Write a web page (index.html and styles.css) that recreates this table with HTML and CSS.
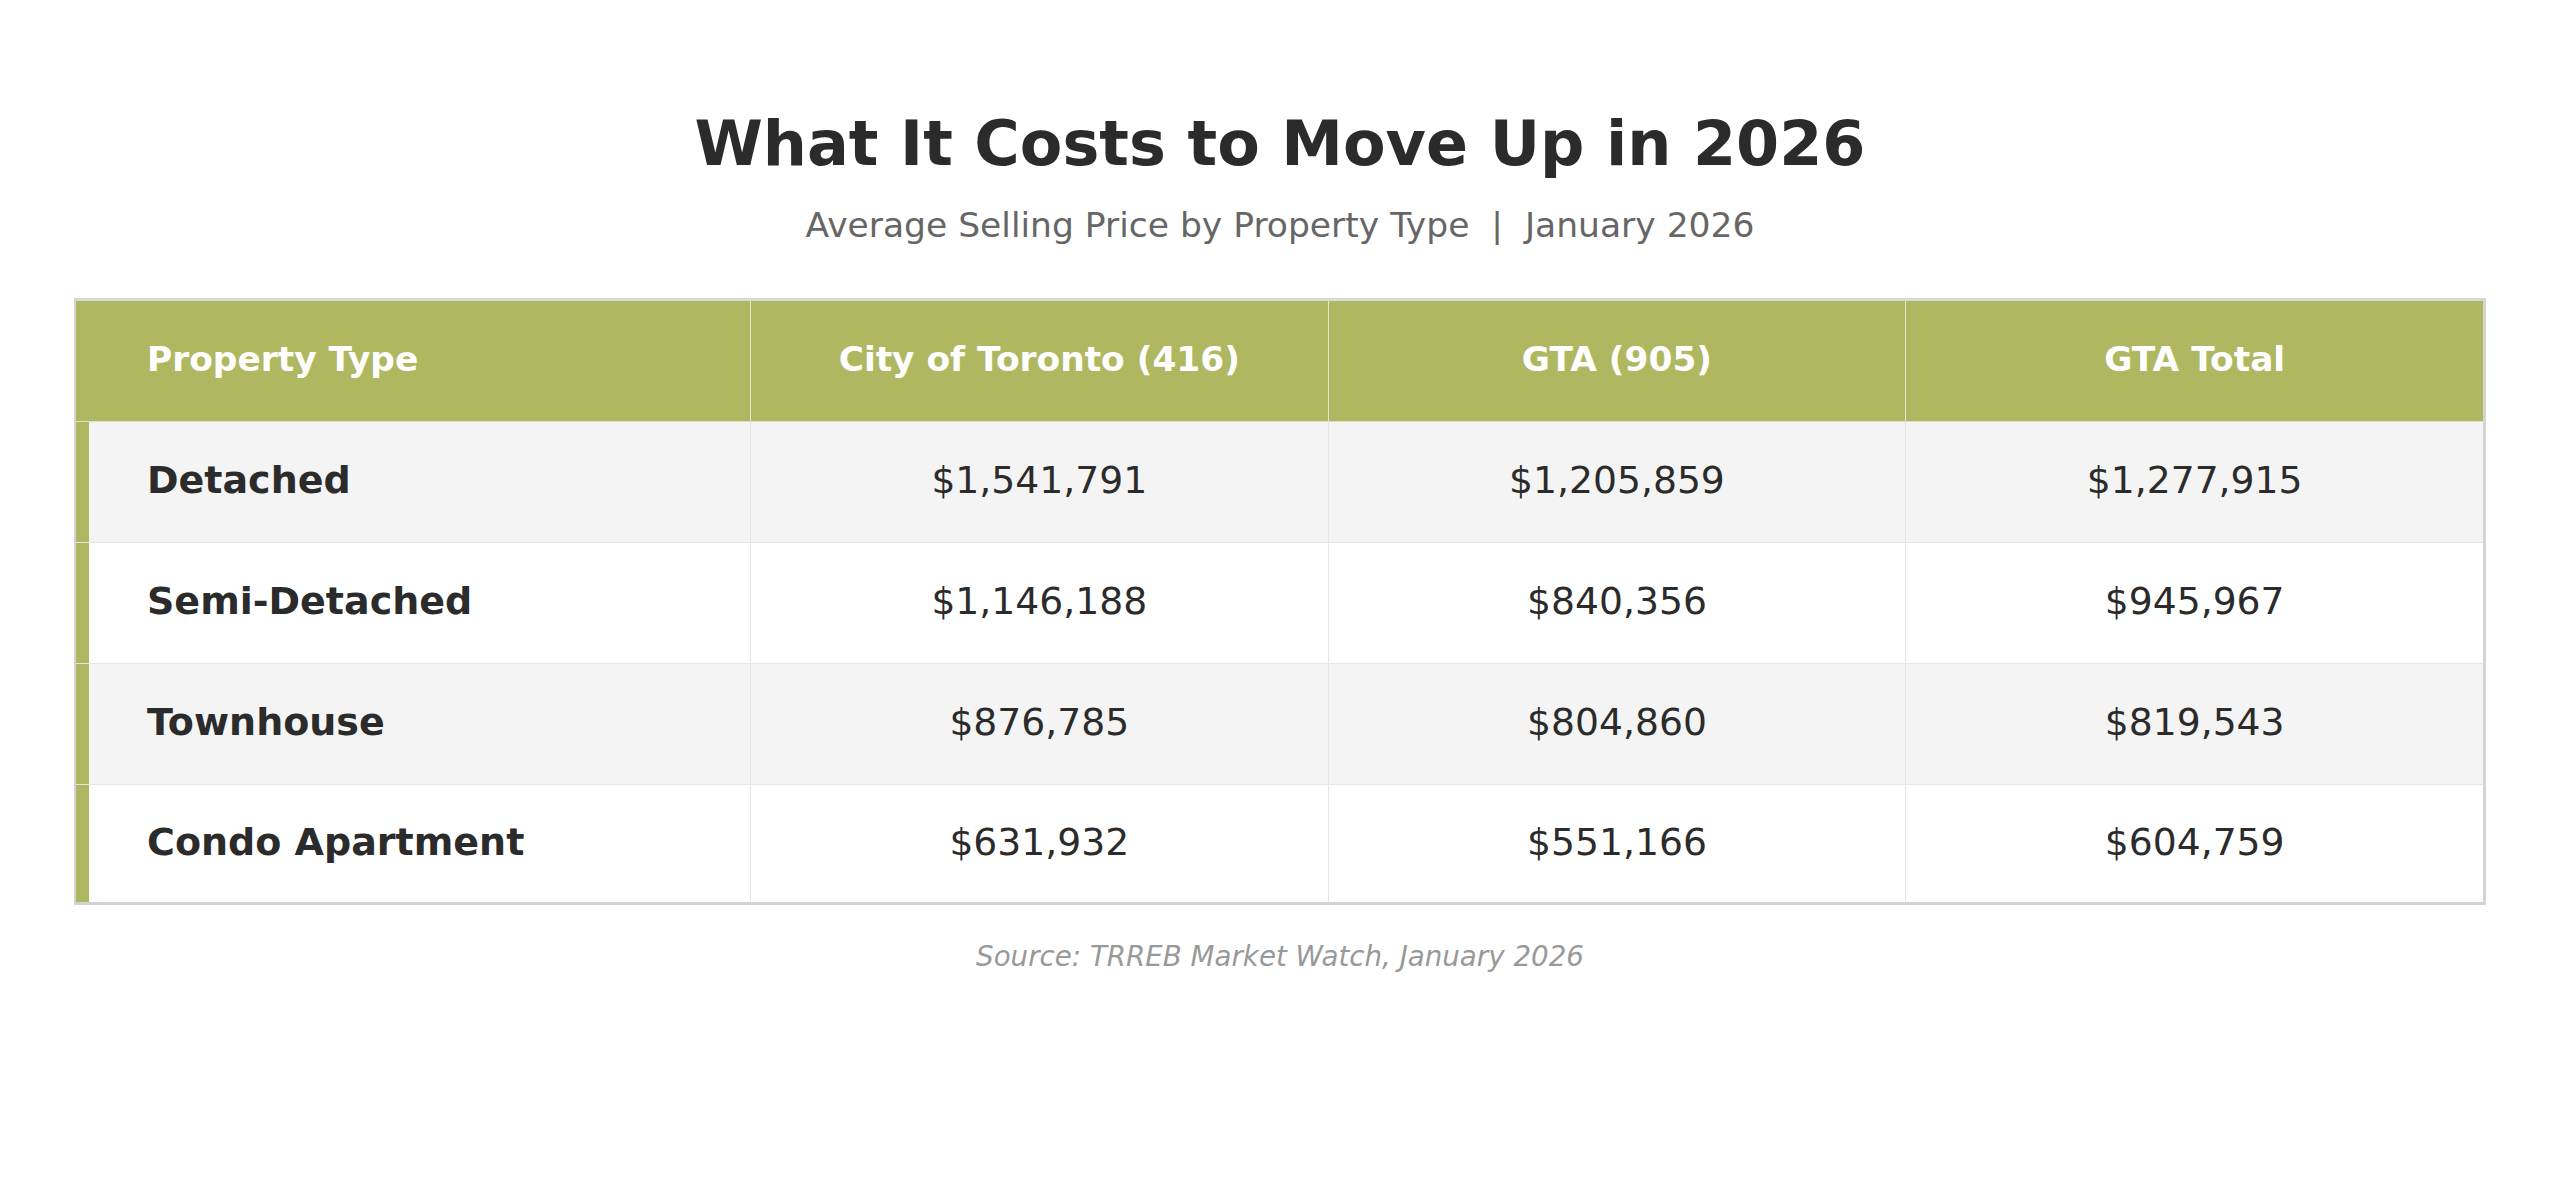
FILE: index.html
```html
<!DOCTYPE html>
<html lang="en">
<head>
<meta charset="utf-8">
<title>What It Costs to Move Up in 2026</title>
<link rel="stylesheet" href="styles.css">
</head>
<body>
<main class="page">
  <h1 class="title">What It Costs to Move Up in 2026</h1>
  <p class="subtitle">Average Selling Price by Property Type &nbsp;|&nbsp; January 2026</p>
  <div class="table">
    <div class="row head">
      <div class="cell first">Property Type</div>
      <div class="cell">City of Toronto (416)</div>
      <div class="cell">GTA (905)</div>
      <div class="cell">GTA Total</div>
    </div>
    <div class="row alt">
      <div class="cell first">Detached</div>
      <div class="cell">$1,541,791</div>
      <div class="cell">$1,205,859</div>
      <div class="cell">$1,277,915</div>
    </div>
    <div class="row">
      <div class="cell first">Semi-Detached</div>
      <div class="cell">$1,146,188</div>
      <div class="cell">$840,356</div>
      <div class="cell">$945,967</div>
    </div>
    <div class="row alt">
      <div class="cell first">Townhouse</div>
      <div class="cell">$876,785</div>
      <div class="cell">$804,860</div>
      <div class="cell">$819,543</div>
    </div>
    <div class="row last">
      <div class="cell first">Condo Apartment</div>
      <div class="cell">$631,932</div>
      <div class="cell">$551,166</div>
      <div class="cell">$604,759</div>
    </div>
  </div>
  <p class="source">Source: TRREB Market Watch, January 2026</p>
</main>
</body>
</html>
```
FILE: styles.css
```css
html, body {
  margin: 0;
  padding: 0;
  background: #ffffff;
}

body {
  font-family: "DejaVu Sans", "Liberation Sans", sans-serif;
  color: #2b2b2b;
}

.page {
  padding: 107px 74px 0;
}

.title {
  margin: 0;
  font-size: 62px;
  line-height: 1.2;
  font-weight: 700;
  text-align: center;
  color: #2b2b2b;
}

.subtitle {
  margin: 24px 0 0;
  font-size: 34.5px;
  line-height: 1.2;
  text-align: center;
  color: #666666;
}

.table {
  margin-top: 51px;
  border-top: 3px solid #d8d8d8;
  border-bottom: 3px solid #d2d2d2;
  border-left: 2px solid #d4d4d4;
  border-right: 3px solid #d4d4d4;
  background: #ffffff;
}

.row {
  display: grid;
  grid-template-columns: 28fr 24fr 24fr 24fr;
  height: 120px;
  border-bottom: 1px solid #e6e6e6;
}

.row.last {
  height: 117px;
  border-bottom: none;
}

.row.alt {
  background: #f4f4f4;
}

.row.head {
  background: #afb860;
  border-bottom: 1px solid #dfe3c4;
}

.cell {
  display: flex;
  align-items: center;
  justify-content: center;
  padding-bottom: 3px;
  font-size: 37.7px;
  color: #2b2b2b;
  border-left: 1px solid #e4e4e4;
}

.cell.first {
  justify-content: flex-start;
  border-left: 13px solid #afb860;
  padding-left: 58px;
  font-size: 38px;
  font-weight: 700;
}

.head .cell {
  color: #ffffff;
  font-size: 34.4px;
  font-weight: 700;
  border-left-color: #e3e7cb;
}

.head .cell.first {
  border-left-color: #afb860;
}

.source {
  margin: 35px 0 0;
  font-size: 27.7px;
  line-height: 1.2;
  font-style: italic;
  text-align: center;
  color: #999999;
}
```
